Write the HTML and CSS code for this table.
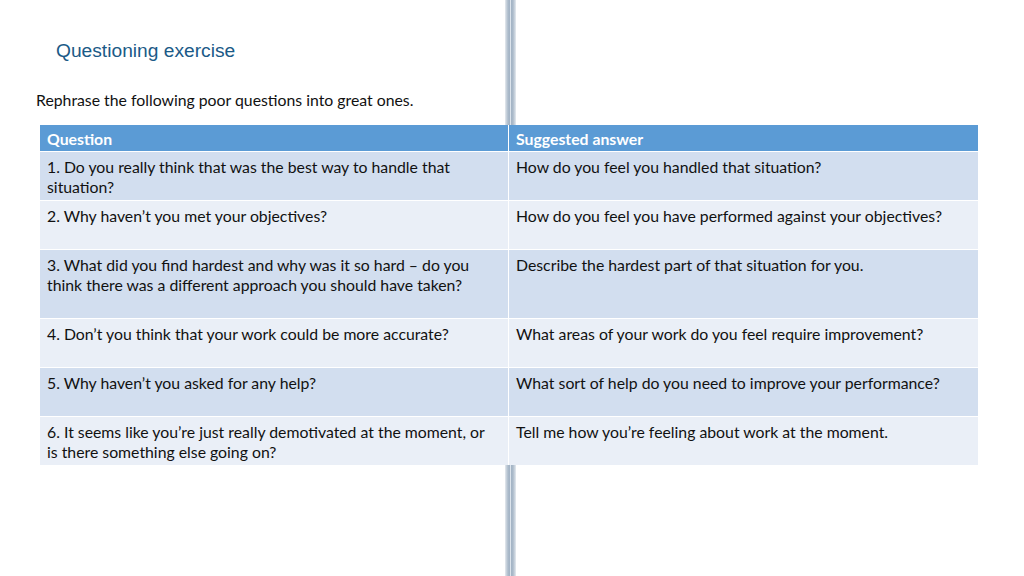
FILE: index.html
```html
<!DOCTYPE html>
<html>
<head>
<meta charset="utf-8">
<link rel="stylesheet" href="styles.css">
</head>
<body>
<div class="slide">
  <div class="divider"></div>
  <h1 class="title">Questioning exercise</h1>
  <p class="intro">Rephrase the following poor questions into great ones.</p>
  <table class="qtable">
    <thead>
      <tr><th>Question</th><th>Suggested answer</th></tr>
    </thead>
    <tbody>
      <tr class="r1"><td>1. Do you really think that was the best way to handle that situation?</td><td>How do you feel you handled that situation?</td></tr>
      <tr class="r2"><td>2. Why haven’t you met your objectives?</td><td>How do you feel you have performed against your objectives?</td></tr>
      <tr class="r3"><td>3. What did you find hardest and why was it so hard – do you think there was a different approach you should have taken?</td><td>Describe the hardest part of that situation for you.</td></tr>
      <tr class="r4"><td>4. Don’t you think that your work could be more accurate?</td><td>What areas of your work do you feel require improvement?</td></tr>
      <tr class="r5"><td>5. Why haven’t you asked for any help?</td><td>What sort of help do you need to improve your performance?</td></tr>
      <tr class="r6"><td>6. It seems like you’re just really demotivated at the moment, or is there something else going on?</td><td>Tell me how you’re feeling about work at the moment.</td></tr>
    </tbody>
  </table>
</div>
</body>
</html>
```
FILE: styles.css
```css
html, body { margin: 0; padding: 0; background: #fff; }
.slide {
  position: relative;
  width: 1024px;
  height: 576px;
  overflow: hidden;
  padding: 0 0 0 40px;
  box-sizing: border-box;
  font-family: Lato, "Open Sans", sans-serif;
}
.divider {
  position: absolute;
  left: 505px;
  top: 0;
  width: 11px;
  height: 576px;
  background: linear-gradient(to right, #e6eaef 0%, #b9c6d3 20%, #9fb0c2 40%, #dce4ec 50%, #9fb0c2 60%, #b9c6d3 80%, #e6eaef 100%);
  z-index: 0;
}
.title {
  position: relative;
  margin: 0 0 0 16px;
  padding-top: 39px;
  font-family: "Liberation Sans", Arial, sans-serif;
  font-weight: normal;
  font-size: 19.2px;
  line-height: 24px;
  color: #1b5a87;
}
.intro {
  position: relative;
  margin: 27px 0 0 -4px;
  font-size: 15.8px;
  line-height: 20px;
  color: #111;
}
.qtable {
  position: relative;
  z-index: 1;
  margin-top: 15px;
  border-collapse: collapse;
  width: 938px;
  table-layout: fixed;
  font-size: 15.8px;
  color: #111;
}
.qtable th, .qtable td {
  text-align: left;
  vertical-align: top;
  padding: 5px 7px 0 7px;
  line-height: 20px;
  border: 1px solid #fff;
}
.qtable th:first-child, .qtable td:first-child { width: 449px; padding-right: 12px; border-left: none; }
.qtable th:last-child, .qtable td:last-child { border-right: none; }
.qtable th {
  background: #5b9bd5;
  color: #fff;
  font-weight: bold;
  height: 22px;
  padding-top: 4px;
  border-top: none;
}
.r1, .r3, .r5 { background: #d2deef; }
.r2, .r4, .r6 { background: #eaeff7; }
.r1 td, .r2 td, .r4 td, .r5 td, .r6 td { height: 43px; }
.r3 td { height: 63px; }
.r6 td { border-bottom: none; }
```
